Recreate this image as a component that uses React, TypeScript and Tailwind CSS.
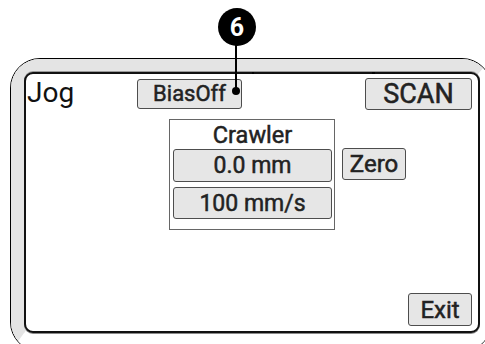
function Btn({ className, children }: { className: string; children: React.ReactNode }) {
  return (
    <div className={`flex items-center justify-center rounded-[3px] border border-[#4d4d4d] bg-[#e6e6e6] leading-none [-webkit-text-stroke:0.5px_#222] ${className}`}>
      {children}
    </div>
  );
}

export default function App() {
  return (
    <div className="relative h-[344px] w-[485px] overflow-hidden bg-white font-['Roboto',sans-serif] text-[#222]">
      {/* device bezel */}
      <div className="ml-[10px] mt-[58px] h-[294px] w-[482px] rounded-[30px] border border-black">
        <div className="h-full rounded-[29px] border-b-[18px] border-l-[13px] border-r-[11px] border-t-[13px] border-b-white border-l-[#e4e4e4] border-r-white border-t-[#e4e4e4] bg-[linear-gradient(135deg,#e4e4e4_50%,#fff_50%)]">
          {/* screen */}
          <div className="relative flex h-full flex-col rounded-[9px] border-2 border-[#111] bg-white shadow-[0_-1px_0_#9a9a9a,0_1px_0_#8a8a8a]">
            <span className="absolute left-[226px] top-[-2px] h-[2px] w-[2px] bg-black" />
            <span className="absolute left-[346px] top-[-2px] h-[2px] w-[3px] bg-black" />

            <div className="flex items-start pl-[1px] pr-[6px] pt-[3px]">
              <div className="w-[110px] text-[28px] leading-[32px] text-[#111]">Jog</div>
              <Btn className="mt-[2px] h-[30px] w-[105px] text-[22px]">BiasOff</Btn>
              <Btn className="ml-auto mt-[1px] h-[32px] w-[107px] text-[27px]">SCAN</Btn>
            </div>

            <div className="ml-[143px] mt-[9px] flex items-start">
              <div className="flex h-[111px] w-[166px] flex-col border border-[#666] pb-[10px] pl-[3px] pr-[2px]">
                <div className="h-[29px] text-center text-[23.5px] leading-[30px] [-webkit-text-stroke:0.5px_#222]">Crawler</div>
                <Btn className="h-[33px] w-[159px] text-[23px]">0.0 mm</Btn>
                <Btn className="mt-[5px] h-[32px] w-[159px] text-[23px]">100 mm/s</Btn>
              </div>
              <Btn className="ml-[7px] mt-[29px] h-[32px] w-[64px] text-[24px]">Zero</Btn>
            </div>

            <Btn className="mb-[5px] mr-[6px] mt-auto h-[33px] w-[64px] self-end text-[24px]">Exit</Btn>
          </div>
        </div>
      </div>

      {/* callout marker */}
      <div className="absolute left-[218px] top-[8px] flex h-[38px] w-[38px] items-center justify-center rounded-full bg-black text-[25px] font-bold leading-none text-white">
        6
      </div>
      <div className="absolute left-[235px] top-[44px] h-[46px] w-[2px] bg-black" />
      <div className="absolute left-[232px] top-[87px] h-[8px] w-[8px] rounded-full bg-black" />
    </div>
  );
}
